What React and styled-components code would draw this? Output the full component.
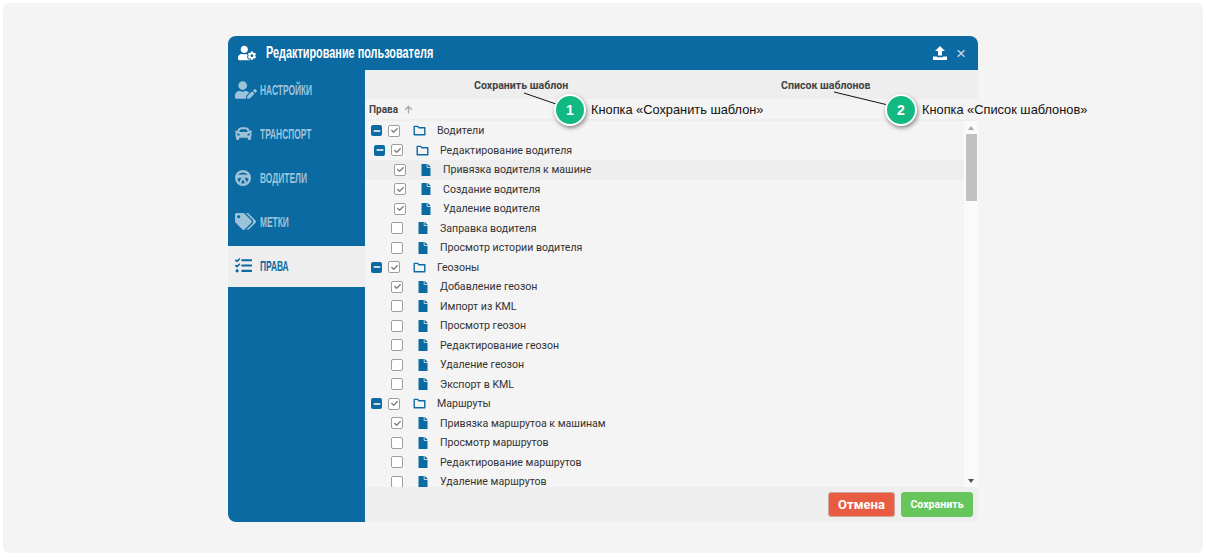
import React from 'react';
import styled, { createGlobalStyle } from 'styled-components';
import {
  FaArrowUp, FaCar, FaCheck, FaFile, FaMinus, FaTags, FaTasks, FaUserCog, FaUserEdit,
} from 'react-icons/fa';

const BLUE = '#0a6aa1';
const NAV_TEXT = '#9cc3da';
const BAR_GREY = '#eeeeee';

const GlobalStyle = createGlobalStyle`
  html, body {
    margin: 0;
    padding: 0;
    background: #ffffff;
  }
`;

const Page = styled.div`
  box-sizing: border-box;
  width: 1206px;
  height: 557px;
  padding: 3px;
`;

const Backdrop = styled.div`
  display: flex;
  justify-content: center;
  box-sizing: border-box;
  height: 550px;
  padding-top: 33px;
  border-radius: 6px;
  background: #f4f4f4;
`;

const Dialog = styled.div`
  position: relative;
  display: flex;
  flex-direction: column;
  width: 750px;
  height: 486px;
  font-family: Roboto, sans-serif;
`;

const Header = styled.header`
  display: flex;
  align-items: center;
  flex: none;
  height: 34px;
  padding: 0 12px 0 10px;
  border-radius: 8px 8px 0 0;
  color: #ffffff;
  background: ${BLUE};
`;

const Title = styled.h1`
  flex: 1;
  margin: 0 0 0 10px;
  font-family: "Liberation Sans", sans-serif;
  font-size: 17px;
  font-weight: 700;
  white-space: nowrap;
  transform: scaleX(0.64);
  transform-origin: left center;
`;

const CloseMark = styled.span`
  margin-left: 9px;
  font-family: "Liberation Sans", sans-serif;
  font-size: 17px;
  line-height: 1;
  color: #c6dcea;
`;

const Body = styled.div`
  display: flex;
  flex: 1;
  min-height: 0;
`;

const Sidebar = styled.nav`
  display: flex;
  flex: none;
  flex-direction: column;
  row-gap: 3px;
  width: 137px;
  border-radius: 0 0 0 8px;
  background: ${BLUE};
`;

const NavItem = styled.div`
  display: flex;
  align-items: center;
  box-sizing: border-box;
  height: 41px;
  padding: 0 0 2px 7px;
  color: ${({ $active }) => ($active ? BLUE : NAV_TEXT)};
  background: ${({ $active }) => ($active ? BAR_GREY : 'transparent')};
`;

const NavIcon = styled.span`
  display: flex;
  flex: none;
  align-items: center;
  width: 25px;
  font-size: ${({ $size }) => $size}px;
`;

const NavLabel = styled.span`
  font-family: "Liberation Sans", sans-serif;
  font-size: 14px;
  font-weight: 700;
  white-space: nowrap;
  transform: scaleX(0.6);
  transform-origin: left center;
`;

const Content = styled.main`
  display: flex;
  flex: 1;
  flex-direction: column;
  min-width: 0;
`;

const Toolbar = styled.div`
  position: relative;
  flex: none;
  height: 29px;
  background: ${BAR_GREY};
`;

const ToolbarLabel = styled.span`
  position: absolute;
  top: 9px;
  left: ${({ $left }) => $left}px;
  font-size: 10.6px;
  font-weight: 700;
  line-height: 13px;
  color: #444444;
`;

const ColumnHead = styled.div`
  display: flex;
  align-items: center;
  flex: none;
  box-sizing: border-box;
  height: 22px;
  padding-left: 4px;
  border-bottom: 2px solid ${BAR_GREY};
  font-size: 10px;
  font-weight: 700;
  color: #444444;
`;

const SortArrow = styled(FaArrowUp)`
  margin-left: 6px;
  font-size: 9px;
  color: #a8a8a8;
`;

const TreeArea = styled.div`
  display: flex;
  flex: 1;
  min-height: 0;
`;

const TreeList = styled.div`
  flex: 1;
  overflow: hidden;
`;

const Row = styled.div`
  display: flex;
  align-items: center;
  box-sizing: border-box;
  height: 19.5px;
  padding-left: ${({ $indent }) => $indent}px;
  font-size: 10.6px;
  white-space: nowrap;
  color: #333333;
  background: ${({ $hover }) => ($hover ? BAR_GREY : 'transparent')};
`;

const ToggleSlot = styled.span`
  flex: none;
  width: 17px;
`;

const Toggle = styled.span`
  display: flex;
  align-items: center;
  justify-content: center;
  width: 11px;
  height: 11px;
  border-radius: 2px;
  font-size: 8px;
  color: #ffffff;
  background: ${BLUE};
`;

const CheckBox = styled.span`
  display: flex;
  flex: none;
  align-items: center;
  justify-content: center;
  box-sizing: border-box;
  width: 12px;
  height: 12px;
  border: 1.5px solid #a39d9a;
  border-radius: 2px;
  font-size: 7px;
  color: #808080;
  background: #ffffff;
`;

const TypeIcon = styled.span`
  display: flex;
  flex: none;
  justify-content: center;
  width: 13px;
  margin: 0 11px 0 13px;
  font-size: 12px;
  color: ${BLUE};
`;

const Scrollbar = styled.div`
  display: flex;
  flex: none;
  flex-direction: column;
  align-items: center;
  width: 14px;
  background: #fafafa;
`;

const ScrollArrow = styled.span`
  width: 0;
  height: 0;
  margin: 5px 0 4px;
  border-right: 3px solid transparent;
  border-left: 3px solid transparent;
  border-${({ $down }) => ($down ? 'top' : 'bottom')}: 4px solid ${({ $down }) => ($down ? '#505050' : '#a8a8a8')};
`;

const ScrollThumb = styled.div`
  width: 11px;
  height: 67px;
  background: #c1c1c1;
`;

const ScrollGap = styled.div`
  flex: 1;
`;

const Footer = styled.footer`
  display: flex;
  align-items: center;
  justify-content: flex-end;
  flex: none;
  column-gap: 6px;
  height: 35px;
  padding-right: 5px;
  border-radius: 0 0 8px 0;
  background: ${BAR_GREY};
`;

const Button = styled.button`
  box-sizing: border-box;
  width: ${({ $width }) => $width}px;
  height: 25px;
  padding: 0;
  border: 1px solid ${({ $edge }) => $edge};
  border-radius: 3px;
  font-family: Roboto, sans-serif;
  font-size: ${({ $size }) => $size}px;
  font-weight: 700;
  color: #ffffff;
  background: ${({ $bg }) => $bg};
`;

const Badge = styled.span`
  position: absolute;
  top: ${({ $top }) => $top}px;
  left: ${({ $left }) => $left}px;
  display: flex;
  align-items: center;
  justify-content: center;
  box-sizing: border-box;
  width: 32px;
  height: 32px;
  border: 2px solid #ffffff;
  border-radius: 50%;
  font-family: "Liberation Sans", sans-serif;
  font-size: 14px;
  font-weight: 700;
  color: #ffffff;
  background: #13b982;
  box-shadow: 1px 2px 4px rgba(0, 0, 0, 0.45);
`;

const Callout = styled.span`
  position: absolute;
  top: 66px;
  left: ${({ $left }) => $left}px;
  font-family: "Liberation Sans", sans-serif;
  font-size: 12.8px;
  line-height: 16px;
  white-space: nowrap;
  color: #111111;
`;

const Leaders = styled.svg`
  position: absolute;
  top: 0;
  left: 0;
  pointer-events: none;
`;

function SteeringWheel() {
  return (
    <svg width="16" height="16" viewBox="0 0 16 16" fill="none" stroke="currentColor">
      <circle cx="8" cy="8" r="6.800" strokeWidth="2.400" />
      <path d="M1.500 7.200c4-1.500 9-1.500 13 0" strokeWidth="3" />
      <path d="M6.300 9.500l-1.300 4.500M9.700 9.500l1.300 4.500" strokeWidth="2" />
      <circle cx="8" cy="8.600" r="2" fill="currentColor" stroke="none" />
    </svg>
  );
}

function UploadIcon() {
  return (
    <svg width="14" height="14" viewBox="0 0 14 14" fill="#ffffff">
      <path d="M7 0l5 5H9v4.500H5V5H2z" />
      <path d="M0 10.500h4v.8h6v-.8h4V14H0z" />
    </svg>
  );
}

function FolderIcon() {
  return (
    <svg width="13" height="11" viewBox="0 0 13 11" fill="none" stroke="currentColor" strokeWidth="1.400">
      <path d="M1.200 9.800V1.400h3.500l1.200 1.300h5.900v7.100z" strokeLinejoin="round" />
    </svg>
  );
}

const navItems = [
  { label: 'НАСТРОЙКИ', icon: <FaUserEdit />, size: 22 },
  { label: 'ТРАНСПОРТ', icon: <FaCar />, size: 17 },
  { label: 'ВОДИТЕЛИ', icon: <SteeringWheel />, size: 16 },
  { label: 'МЕТКИ', icon: <FaTags />, size: 21 },
  { label: 'ПРАВА', icon: <FaTasks />, size: 17, active: true },
];

const rows = [
  { label: 'Водители', indent: 6, group: true, checked: true },
  { label: 'Редактирование водителя', indent: 9, group: true, checked: true },
  { label: 'Привязка водителя к машине', indent: 29, checked: true, hover: true },
  { label: 'Создание водителя', indent: 29, checked: true },
  { label: 'Удаление водителя', indent: 29, checked: true },
  { label: 'Заправка водителя', indent: 26 },
  { label: 'Просмотр истории водителя', indent: 26 },
  { label: 'Геозоны', indent: 6, group: true, checked: true },
  { label: 'Добавление геозон', indent: 26, checked: true },
  { label: 'Импорт из KML', indent: 26 },
  { label: 'Просмотр геозон', indent: 26 },
  { label: 'Редактирование геозон', indent: 26 },
  { label: 'Удаление геозон', indent: 26 },
  { label: 'Экспорт в KML', indent: 26 },
  { label: 'Маршруты', indent: 6, group: true, checked: true },
  { label: 'Привязка маршрутоа к машинам', indent: 26, checked: true },
  { label: 'Просмотр маршрутов', indent: 26 },
  { label: 'Редактирование маршрутов', indent: 26 },
  { label: 'Удаление маршрутов', indent: 26 },
];

function TreeRow({ row }) {
  return (
    <Row $indent={row.indent} $hover={row.hover}>
      {row.group && (
        <ToggleSlot>
          <Toggle><FaMinus /></Toggle>
        </ToggleSlot>
      )}
      <CheckBox>{row.checked && <FaCheck />}</CheckBox>
      <TypeIcon>
        {row.group ? <FolderIcon /> : <FaFile />}
      </TypeIcon>
      {row.label}
    </Row>
  );
}

function App() {
  return (
    <Page>
      <GlobalStyle />
      <Backdrop>
        <Dialog>
          <Header>
            <FaUserCog size={18} />
            <Title>Редактирование пользователя</Title>
            <UploadIcon />
            <CloseMark>×</CloseMark>
          </Header>
          <Body>
            <Sidebar>
              {navItems.map((item) => (
                <NavItem key={item.label} $active={item.active}>
                  <NavIcon $size={item.size}>{item.icon}</NavIcon>
                  <NavLabel>{item.label}</NavLabel>
                </NavItem>
              ))}
            </Sidebar>
            <Content>
              <Toolbar>
                <ToolbarLabel $left={109}>Сохранить шаблон</ToolbarLabel>
                <ToolbarLabel $left={416}>Список шаблонов</ToolbarLabel>
              </Toolbar>
              <ColumnHead>
                Права
                <SortArrow />
              </ColumnHead>
              <TreeArea>
                <TreeList>
                  {rows.map((row) => <TreeRow key={row.label} row={row} />)}
                </TreeList>
                <Scrollbar>
                  <ScrollArrow />
                  <ScrollThumb />
                  <ScrollGap />
                  <ScrollArrow $down />
                </Scrollbar>
              </TreeArea>
              <Footer>
                <Button $width={67} $size={13} $bg="#e85c41" $edge="#cfa69d">Отмена</Button>
                <Button $width={72} $size={10.6} $bg="#66c65c" $edge="#66c65c">Сохранить</Button>
              </Footer>
            </Content>
          </Body>
          <Leaders width="750" height="120">
            <path d="M296 57L328 68M606 56L660 69" stroke="#111111" strokeWidth="1" fill="none" />
          </Leaders>
          <Badge $top={58} $left={326}>1</Badge>
          <Callout $left={363}>Кнопка «Сохранить шаблон»</Callout>
          <Badge $top={58} $left={657}>2</Badge>
          <Callout $left={694}>Кнопка «Список шаблонов»</Callout>
        </Dialog>
      </Backdrop>
    </Page>
  );
}

export default App;
